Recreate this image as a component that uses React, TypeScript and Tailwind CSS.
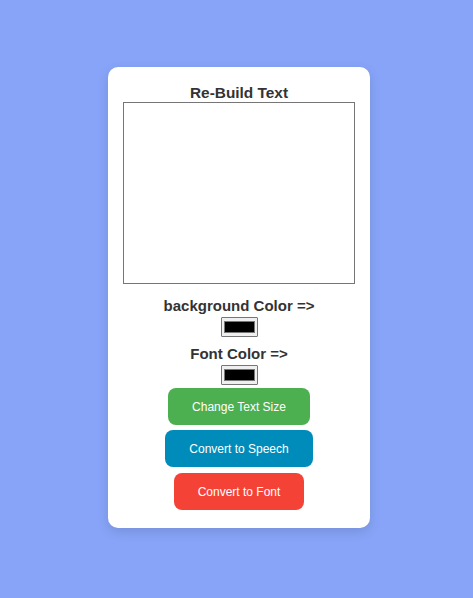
import React, { useState } from 'react';

const ColorSwatch = ({ color }: { color: string }) => (
  <div className="w-[37px] h-[20px] border border-[#767676] bg-[#efefef] px-[2px] py-[3px] rounded-[1px]">
    <div className="w-full h-full border border-[#777777]" style={{ backgroundColor: color }} />
  </div>
);

export default function App() {
  const [text, setText] = useState('');
  const [bg] = useState('#000000');
  const [fg] = useState('#000000');

  return (
    <div
      className="min-h-screen w-full bg-[#87a4f8] flex items-center justify-center pl-[5px] pb-[3px]"
      style={{ fontFamily: '"Liberation Sans", Arial, sans-serif' }}
    >
      <div className="w-[262px] bg-white rounded-[10px] shadow-[0_4px_12px_rgba(0,0,0,0.12)] px-[15px] pt-[17px] pb-[18px] flex flex-col items-center text-[#333333]">
        <h3 className="text-[15.4px] font-bold leading-[17px] mb-[1px]">Re-Build Text</h3>
        <textarea
          value={text}
          onChange={(e) => setText(e.target.value)}
          className="w-full h-[182px] border border-[#767676] resize-none outline-none p-[2px] text-[13px]"
        />

        <h4 className="text-[15px] font-bold leading-[17px] mt-[12.9px]">background Color =&gt;</h4>
        <div className="mt-[3.1px]">
          <ColorSwatch color={bg} />
        </div>

        <h4 className="text-[15px] font-bold leading-[17px] mt-[7.9px]">Font Color =&gt;</h4>
        <div className="mt-[3.1px]">
          <ColorSwatch color={fg} />
        </div>

        <div className="flex flex-col items-center gap-[5.5px] mt-[3px]">
          <button className="h-[37px] px-6 pt-px rounded-[8px] bg-[#4caf50] text-white text-[12px]">
            Change Text Size
          </button>
          <button className="h-[37px] px-6 pt-px rounded-[8px] bg-[#008cba] text-white text-[12px]">
            Convert to Speech
          </button>
          <button className="h-[37px] px-6 pt-px rounded-[8px] bg-[#f44336] text-white text-[12px]">
            Convert to Font
          </button>
        </div>
      </div>
    </div>
  );
}
